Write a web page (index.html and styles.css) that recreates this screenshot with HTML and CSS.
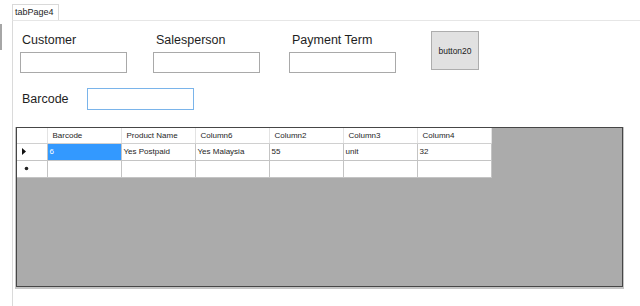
FILE: index.html
```html
<!DOCTYPE html>
<html lang="en">
<head>
  <meta charset="UTF-8">
  <title>tabPage4</title>
  <link rel="stylesheet" href="styles.css">
</head>
<body>
  <div class="window">
    <div class="side">
      <div class="stub"></div>
    </div>

    <div class="tabs">
      <div class="tabstrip">
        <div class="tab">tabPage4</div>
      </div>

      <div class="page">
        <div class="fields">
          <div class="field">
            <label>Customer</label>
            <input type="text" class="box">
          </div>
          <div class="field">
            <label>Salesperson</label>
            <input type="text" class="box">
          </div>
          <div class="field">
            <label>Payment Term</label>
            <input type="text" class="box">
          </div>
          <button class="btn">button20</button>
        </div>

        <div class="barcode-row">
          <label>Barcode</label>
          <input type="text" class="box focus">
        </div>

        <div class="grid">
          <table>
            <tr class="head">
              <th class="rowhead"></th>
              <th>Barcode</th>
              <th>Product Name</th>
              <th>Column6</th>
              <th>Column2</th>
              <th>Column3</th>
              <th>Column4</th>
            </tr>
            <tr>
              <td class="rowhead">
                <svg width="5" height="7" viewBox="0 0 5 7"><path d="M0 0 L4 3.5 L0 7 Z" fill="#111"/></svg>
              </td>
              <td class="sel">6</td>
              <td>Yes Postpaid</td>
              <td>Yes Malaysia</td>
              <td>55</td>
              <td>unit</td>
              <td>32</td>
            </tr>
            <tr>
              <td class="rowhead">
                <svg width="5" height="5" viewBox="0 0 5 5"><circle cx="2.5" cy="2.5" r="1.8" fill="#222"/></svg>
              </td>
              <td></td><td></td><td></td><td></td><td></td><td></td>
            </tr>
          </table>
        </div>
      </div>
    </div>
  </div>
</body>
</html>
```

FILE: styles.css
```css
html, body {
  margin: 0;
  height: 100%;
  background: #fff;
  font-family: "Liberation Sans", Arial, sans-serif;
  color: #1e1e1e;
}

.window {
  display: flex;
  height: 306px;
}

.side {
  width: 12px;
}

.stub {
  width: 2px;
  height: 26px;
  margin-top: 24px;
  background: #a6a6a6;
}

.tabs {
  flex: 1;
  display: flex;
  flex-direction: column;
}

.tabstrip {
  height: 20px;
  display: flex;
  align-items: flex-end;
}

.tab {
  height: 15px;
  padding: 0 4px 0 2px;
  border: 1px solid #d9d9d9;
  border-bottom: none;
  font-size: 9px;
  line-height: 14px;
  background: #fff;
}

.page {
  flex: 1;
  border-left: 1px solid #dadada;
  border-top: 1px solid #e6e6e6;
}

.fields {
  display: grid;
  grid-template-columns: 133px 136px 142px 48px;
  align-items: start;
  padding: 10px 0 0 7px;
}

.field label {
  display: block;
  margin: 2px 0 5px 3px;
  font-size: 12.5px;
  line-height: 14px;
}

.field:first-child label {
  margin-left: 2px;
}

.box {
  box-sizing: border-box;
  width: 107px;
  height: 21px;
  margin: 0;
  border: 1px solid #a9a9a9;
  background: #fff;
  display: block;
}

.btn {
  box-sizing: border-box;
  width: 48px;
  height: 39px;
  margin: 0;
  padding: 0;
  border: 1px solid #adadad;
  background: #e1e1e1;
  font-family: "Liberation Sans", Arial, sans-serif;
  font-size: 8.5px;
  color: #222;
}

.barcode-row {
  display: flex;
  align-items: center;
  margin-top: 15px;
  padding-left: 9px;
}

.barcode-row label {
  width: 65px;
  font-size: 12.5px;
}

.box.focus {
  height: 22px;
  border-color: #7ab4ea;
}

.grid {
  box-sizing: border-box;
  width: 607px;
  height: 160px;
  margin: 17px 0 0 3px;
  background: #ababab;
  border: 1px solid #464646;
  box-shadow: 0 1px 0 1px #c4c4c4;
}

table {
  border-collapse: collapse;
  background: #fff;
  font-size: 8px;
}

th, td {
  box-sizing: border-box;
  width: 74px;
  padding: 0 0 0 2px;
  text-align: left;
  vertical-align: middle;
  border: 1px solid #c4c4c4;
  white-space: nowrap;
}

th {
  height: 15px;
  padding-left: 5px;
  font-weight: normal;
  border-color: #e3e3e3;
  border-bottom-color: #d0d0d0;
}

td {
  height: 17px;
}

tr:first-child th {
  border-top: none;
}

.rowhead {
  width: 30px;
  padding: 0 0 0 5px;
  border-left: none;
}

td.rowhead svg {
  display: block;
}

tr:last-child td.rowhead svg {
  margin-left: 2px;
}

td.sel {
  background: #3399ff;
  color: #fff;
}
```
